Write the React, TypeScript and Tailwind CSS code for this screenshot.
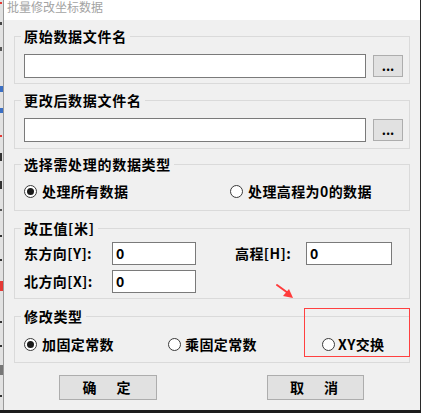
import React from "react";

const FONT = { fontFamily: '"Noto Sans CJK SC", "Noto Sans", sans-serif' };

function Radio({ checked }: { checked?: boolean }) {
  return (
    <span className="w-[13px] h-[13px] rounded-full border border-[#3a3a3a] bg-white flex items-center justify-center shrink-0">
      {checked ? <span className="w-[7px] h-[7px] rounded-full bg-[#1a1a1a]" /> : null}
    </span>
  );
}

function Legend({ children }: { children: React.ReactNode }) {
  return (
    <legend className="px-[3px] text-[14px] leading-[14px] font-bold tracking-[0.7px] text-black">
      {children}
    </legend>
  );
}

function Field({ value }: { value?: string }) {
  return (
    <div className="bg-white border border-[#7a7a7a] h-full w-full flex items-center pl-[3px] text-[14px] font-bold text-black">
      {value}
    </div>
  );
}

export default function App() {
  return (
    <div
      className="relative w-[421px] h-[413px] overflow-hidden bg-[#f0f0f0] flex flex-col"
      style={FONT}
    >
      <div className="flex flex-1 min-h-0">
        {/* left background strip */}
        <div className="w-[3px] bg-[#e2e2e2] flex flex-col">
          <span className="mt-[2px] h-[2px] w-[2px] bg-[#e53935]" />
          <span className="mt-[18px] h-[3px] w-[2px] bg-[#444]" />
          <span className="mt-[22px] h-[4px] w-[2px] bg-[#555]" />
          <span className="mt-[35px] h-[6px] w-[3px] bg-[#3b6fc4]" />
          <span className="mt-[16px] h-[5px] w-[3px] bg-[#3b6fc4]" />
          <span className="mt-[22px] h-[2px] w-[2px] bg-[#e53935]" />
          <span className="mt-[16px] h-[8px] w-[2px] bg-[#333]" />
          <span className="mt-[20px] h-[8px] w-[2px] bg-[#333]" />
          <span className="mt-[20px] h-[2px] w-[2px] bg-[#555]" />
          <span className="mt-[24px] h-[2px] w-[2px] bg-[#333]" />
          <span className="mt-[22px] h-[2px] w-[2px] bg-[#333]" />
          <span className="mt-[20px] h-[10px] w-[3px] bg-[#e53935]" />
          <span className="mt-[30px] h-[2px] w-[2px] bg-[#333]" />
          <span className="mt-[22px] h-[2px] w-[2px] bg-[#333]" />
          <span className="mt-[18px] h-[10px] w-[3px] bg-[#777]" />
          <span className="mt-[20px] h-[2px] w-[2px] bg-[#333]" />
        </div>
        <div className="w-[1px] bg-[#9a9a9a]" />

        {/* dialog */}
        <div className="flex-1 flex flex-col">
          <div className="h-[20px] bg-white pl-[3px]">
            <div className="text-[12px] leading-[14px] text-[#a3a3a3]">批量修改坐标数据</div>
          </div>

          <div className="flex-1 bg-[#f0f0f0] px-[10px] pt-[9px] flex flex-col">
            {/* group 1 */}
            <fieldset className="border border-[#dadada] px-[6px] pt-[11px] pb-[5px]">
              <Legend>原始数据文件名</Legend>
              <div className="flex items-center pl-[3px] h-[24px]">
                <div className="flex-1 h-[24px]">
                  <Field />
                </div>
                <button className="ml-[7px] w-[30px] h-[22px] bg-[#e1e1e1] border border-[#adadad] text-[13px] font-bold leading-[14px] text-black flex items-end justify-center pb-[3px]">
                  ...
                </button>
              </div>
            </fieldset>

            {/* group 2 */}
            <fieldset className="mt-[9px] border border-[#dadada] px-[6px] pt-[11px] pb-[6px]">
              <Legend>更改后数据文件名</Legend>
              <div className="flex items-center pl-[3px] h-[24px]">
                <div className="flex-1 h-[24px]">
                  <Field />
                </div>
                <button className="ml-[7px] w-[30px] h-[22px] bg-[#e1e1e1] border border-[#adadad] text-[13px] font-bold leading-[14px] text-black flex items-end justify-center pb-[3px]">
                  ...
                </button>
              </div>
            </fieldset>

            {/* group 3 */}
            <fieldset className="mt-[8px] border border-[#dadada] px-[6px] pt-[12px] pb-[11px]">
              <Legend>选择需处理的数据类型</Legend>
              <div className="flex items-center pl-[3px] h-[16px] text-[14px] font-bold tracking-[0.4px] text-black">
                <div className="w-[206px] flex items-center gap-[5px]">
                  <Radio checked />
                  <span>处理所有数据</span>
                </div>
                <div className="flex items-center gap-[5px]">
                  <Radio />
                  <span>处理高程为0的数据</span>
                </div>
              </div>
            </fieldset>

            {/* group 4 */}
            <fieldset className="mt-[10px] border border-[#dadada] px-[6px] pt-[7px] pb-[5px]">
              <Legend>改正值[米]</Legend>
              <div className="flex flex-col gap-[5px] pl-[3px] text-[14px] font-bold tracking-[0.4px] text-black">
                <div className="flex items-center h-[23px]">
                  <span className="w-[88px]">东方向[Y]:</span>
                  <div className="w-[84px] h-[23px]">
                    <Field value="0" />
                  </div>
                  <span className="ml-[39px] w-[71px]">高程[H]:</span>
                  <div className="w-[86px] h-[23px]">
                    <Field value="0" />
                  </div>
                </div>
                <div className="flex items-center h-[23px]">
                  <span className="w-[88px]">北方向[X]:</span>
                  <div className="w-[84px] h-[23px]">
                    <Field value="0" />
                  </div>
                </div>
              </div>
            </fieldset>

            {/* group 5 */}
            <fieldset className="mt-[10px] border border-[#dadada] px-[6px] pt-[13px] pb-[10px]">
              <Legend>修改类型</Legend>
              <div className="flex items-center pl-[3px] h-[16px] text-[14px] font-bold tracking-[0.4px] text-black">
                <div className="w-[144px] flex items-center gap-[5px]">
                  <Radio checked />
                  <span>加固定常数</span>
                </div>
                <div className="w-[154px] flex items-center gap-[4px]">
                  <Radio />
                  <span>乘固定常数</span>
                </div>
                <div className="flex items-center gap-[3px]">
                  <Radio />
                  <span>XY交换</span>
                </div>
              </div>
            </fieldset>

            {/* buttons */}
            <div className="mt-[12px] flex -ml-[10px]">
              <button className="ml-[55px] w-[98px] h-[25px] bg-[#e1e1e1] border border-[#adadad] text-[14px] font-bold tracking-[3px] text-black flex items-center justify-center">
                确　定
              </button>
              <button className="ml-[110px] w-[97px] h-[25px] bg-[#e1e1e1] border border-[#adadad] text-[14px] font-bold tracking-[3px] text-black flex items-center justify-center">
                取　消
              </button>
            </div>
          </div>
        </div>
        <div className="w-[1px] bg-[#2a2a2a]" />
      </div>
      <div className="h-[3px] bg-[#1c1c1c]" />

      {/* annotation overlays */}
      <svg className="absolute left-[274px] top-[282px]" width="22" height="20" viewBox="0 0 22 20">
        <line x1="3" y1="3" x2="14" y2="11" stroke="#ff3b3b" strokeWidth="2" strokeLinecap="round" />
        <polygon points="19,16 9,14 15,7" fill="#ff3b3b" />
      </svg>
      <div className="absolute left-[304px] top-[308px] w-[106px] h-[49px] border border-[#ff4040]" />
    </div>
  );
}
